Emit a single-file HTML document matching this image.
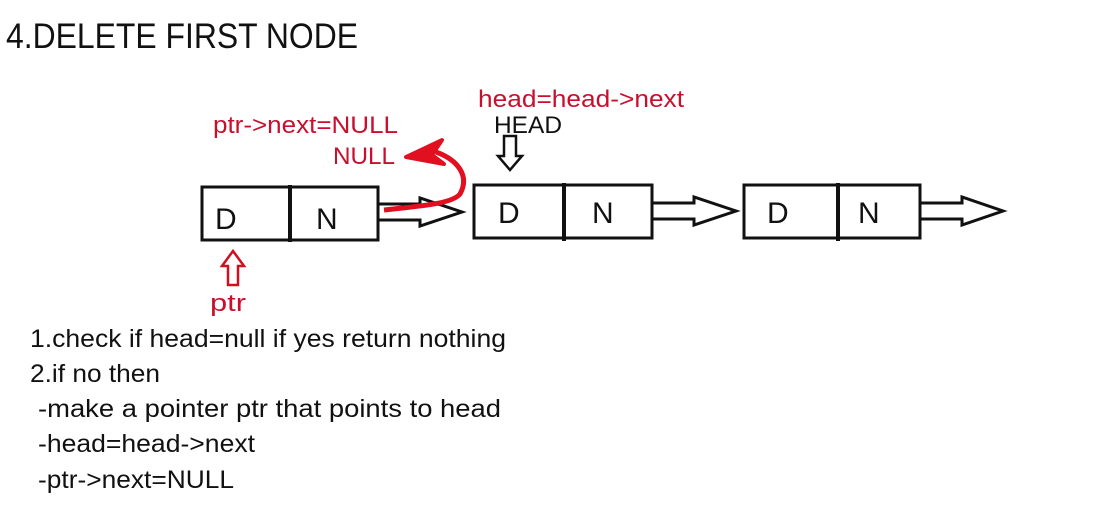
<!DOCTYPE html>
<html><head><style>html,body{margin:0;padding:0;background:#fff;}svg{display:block}</style></head>
<body>
<svg width="1100" height="520" viewBox="0 0 1100 520" xmlns="http://www.w3.org/2000/svg" font-family="'Liberation Sans', sans-serif">
<text x="6" y="48" font-size="35" fill="#111" textLength="352" lengthAdjust="spacingAndGlyphs">4.DELETE FIRST NODE</text>

<g fill="none" stroke="#111" stroke-width="3">
<rect x="202" y="187" width="176" height="53"/>
<line x1="290" y1="185" x2="290" y2="242" stroke-width="4"/>
<rect x="474" y="185" width="178" height="53"/>
<line x1="564" y1="183" x2="564" y2="241" stroke-width="4"/>
<rect x="744" y="185" width="176" height="53"/>
<line x1="838" y1="183" x2="838" y2="241" stroke-width="4"/>
<path d="M379 204 H420 V198 L462 212 L420 226 V220 H379"/>
<path d="M652 203 H694 V197 L736 211 L694 225 V219 H652"/>
<path d="M921 203 H962 V197 L1003 211 L962 225 V219 H921"/>
<path d="M504 136 H516 V156 H522 L510 170 L498 156 H504 Z" stroke-width="2.5"/>
</g>
<g font-size="30" fill="#111">
<text x="215" y="229">D</text><text x="316" y="229">N</text>
<text x="498" y="223">D</text><text x="592" y="223">N</text>
<text x="767" y="223">D</text><text x="858" y="223">N</text>
</g>
<path d="M228 285 V266 H222 L233 251 L244 266 H238 V285 Z" fill="none" stroke="#d01020" stroke-width="2.5"/>
<path d="M384 210 C420 206 452 204 460 194 C470 176 458 160 436 152" fill="none" stroke="#e01020" stroke-width="5"/>
<path d="M442 140 L406 157 L444 164 L432 155 Z" fill="#e01020" stroke="#e01020" stroke-width="4" stroke-linejoin="round"/>
<g font-size="24" fill="#c8102e">
<text x="478" y="107" textLength="206" lengthAdjust="spacingAndGlyphs">head=head-&gt;next</text>
<text x="213" y="133" textLength="185" lengthAdjust="spacingAndGlyphs">ptr-&gt;next=NULL</text>
<text x="333" y="164" textLength="62" lengthAdjust="spacingAndGlyphs">NULL</text>
<text x="210" y="311" textLength="36" lengthAdjust="spacingAndGlyphs">ptr</text>
</g>
<text x="494" y="133" font-size="24" fill="#111" textLength="68" lengthAdjust="spacingAndGlyphs">HEAD</text>
<g font-size="25" fill="#111">
<text x="30" y="347" textLength="476" lengthAdjust="spacingAndGlyphs">1.check if head=null if yes return nothing</text>
<text x="30" y="382" textLength="130" lengthAdjust="spacingAndGlyphs">2.if no then</text>
<text x="38" y="417" textLength="463" lengthAdjust="spacingAndGlyphs">-make a pointer ptr that points to head</text>
<text x="38" y="452" textLength="217" lengthAdjust="spacingAndGlyphs">-head=head-&gt;next</text>
<text x="38" y="488" textLength="196" lengthAdjust="spacingAndGlyphs">-ptr-&gt;next=NULL</text>
</g>
</svg>
</body></html>
